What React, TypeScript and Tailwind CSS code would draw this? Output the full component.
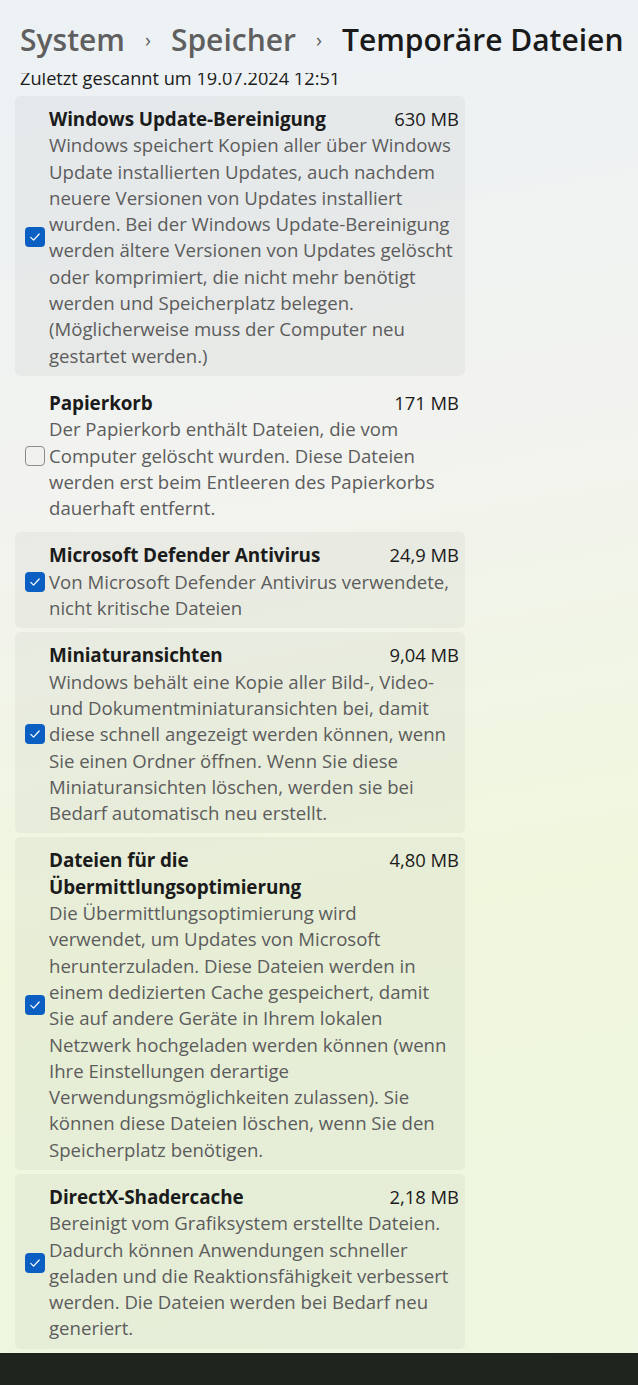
import React from "react";

type Item = {
  title: string[];
  size: string;
  lines: string[];
  checked: boolean;
};

const items: Item[] = [
  {
    title: ["Windows Update-Bereinigung"],
    size: "630 MB",
    checked: true,
    lines: [
      "Windows speichert Kopien aller über Windows",
      "Update installierten Updates, auch nachdem",
      "neuere Versionen von Updates installiert",
      "wurden. Bei der Windows Update-Bereinigung",
      "werden ältere Versionen von Updates gelöscht",
      "oder komprimiert, die nicht mehr benötigt",
      "werden und Speicherplatz belegen.",
      "(Möglicherweise muss der Computer neu",
      "gestartet werden.)",
    ],
  },
  {
    title: ["Papierkorb"],
    size: "171 MB",
    checked: false,
    lines: [
      "Der Papierkorb enthält Dateien, die vom",
      "Computer gelöscht wurden. Diese Dateien",
      "werden erst beim Entleeren des Papierkorbs",
      "dauerhaft entfernt.",
    ],
  },
  {
    title: ["Microsoft Defender Antivirus"],
    size: "24,9 MB",
    checked: true,
    lines: ["Von Microsoft Defender Antivirus verwendete,", "nicht kritische Dateien"],
  },
  {
    title: ["Miniaturansichten"],
    size: "9,04 MB",
    checked: true,
    lines: [
      "Windows behält eine Kopie aller Bild-, Video-",
      "und Dokumentminiaturansichten bei, damit",
      "diese schnell angezeigt werden können, wenn",
      "Sie einen Ordner öffnen. Wenn Sie diese",
      "Miniaturansichten löschen, werden sie bei",
      "Bedarf automatisch neu erstellt.",
    ],
  },
  {
    title: ["Dateien für die", "Übermittlungsoptimierung"],
    size: "4,80 MB",
    checked: true,
    lines: [
      "Die Übermittlungsoptimierung wird",
      "verwendet, um Updates von Microsoft",
      "herunterzuladen. Diese Dateien werden in",
      "einem dedizierten Cache gespeichert, damit",
      "Sie auf andere Geräte in Ihrem lokalen",
      "Netzwerk hochgeladen werden können (wenn",
      "Ihre Einstellungen derartige",
      "Verwendungsmöglichkeiten zulassen). Sie",
      "können diese Dateien löschen, wenn Sie den",
      "Speicherplatz benötigen.",
    ],
  },
  {
    title: ["DirectX-Shadercache"],
    size: "2,18 MB",
    checked: true,
    lines: [
      "Bereinigt vom Grafiksystem erstellte Dateien.",
      "Dadurch können Anwendungen schneller",
      "geladen und die Reaktionsfähigkeit verbessert",
      "werden. Die Dateien werden bei Bedarf neu",
      "generiert.",
    ],
  },
];

function Check({ checked }: { checked: boolean }) {
  if (!checked) {
    return <div className="w-[20px] h-[20px] rounded-[4px] border border-[#8b8b8b] bg-[#f1f1ef]" />;
  }
  return (
    <div className="w-[20px] h-[20px] rounded-[4px] bg-[#0b5fc3] flex items-center justify-center">
      <svg width="12" height="12" viewBox="0 0 12 12" fill="none">
        <path d="M1.8 6.4 L4.6 9.1 L10.2 3" stroke="white" strokeWidth="1.2" strokeLinecap="round" strokeLinejoin="round" />
      </svg>
    </div>
  );
}

function Row({ item }: { item: Item }) {
  return (
    <div className={`flex items-center rounded-[5px] pt-[10px] pb-[7px] pl-[10px] pr-[6px] ${item.checked ? "bg-black/[0.035]" : ""}`}>
      <div className="w-[24px] shrink-0">
        <Check checked={item.checked} />
      </div>
      <div className="flex-1">
        <div className="flex justify-between">
          <div className="font-bold text-[#1b1b1b] text-[18.9px] leading-[26.3px] tracking-[-0.1px]">
            {item.title.map((t) => (
              <div key={t} className="whitespace-nowrap">{t}</div>
            ))}
          </div>
          <div className="text-[#1b1b1b] text-[18.4px] leading-[26.3px] whitespace-nowrap">{item.size}</div>
        </div>
        <div className="text-[#5c5c5c] text-[18.6px] leading-[26.3px]">
          {item.lines.map((l) => (
            <div key={l} className="whitespace-nowrap">{l}</div>
          ))}
        </div>
      </div>
    </div>
  );
}

export default function App() {
  return (
    <div
      className="w-[638px] h-[1385px] flex flex-col bg-[linear-gradient(170deg,#ecf1f5_0%,#f2f3ef_35%,#f0f7dd_65%,#eef6e1_100%)]"
      style={{ fontFamily: '"Open Sans", "Noto Sans", sans-serif' }}
    >
      <div className="h-[73px] shrink-0 pl-[20px] pt-[18px] flex items-start gap-[20px] text-[30px] leading-[44px]">
        <span className="text-[#5f5f5f] font-semibold">System</span>
        <span className="text-[#5f5f5f] text-[20px] leading-[44px]">›</span>
        <span className="text-[#5f5f5f] font-semibold">Speicher</span>
        <span className="text-[#5f5f5f] text-[20px] leading-[44px]">›</span>
        <span className="text-[#1a1a1a] font-semibold whitespace-nowrap">Temporäre Dateien</span>
      </div>
      <div className="flex-1 overflow-hidden">
        <div className="pl-[20px] -mt-[7px] text-[18.2px] leading-[24px] text-[#1b1b1b] whitespace-nowrap">Zuletzt gescannt um 19.07.2024 12:51</div>
        <div className="ml-[15px] mt-[6px] w-[450px] flex flex-col gap-[4px]">
          {items.map((it) => (
            <Row key={it.size} item={it} />
          ))}
        </div>
      </div>
      <div className="h-[32px] shrink-0 bg-[#1f241c]" />
    </div>
  );
}
